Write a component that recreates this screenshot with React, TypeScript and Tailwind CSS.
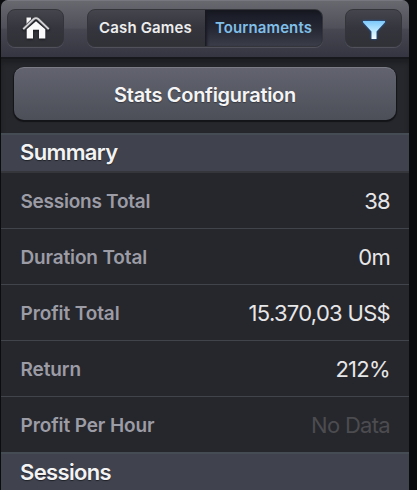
const rows = [
  { label: "Sessions Total", value: "38", tone: "text-[#e6e6e8]", lt: "tracking-[-0.25px]", vt: "tracking-[-0.7px]" },
  { label: "Duration Total", value: "0m", tone: "text-[#e6e6e8]", lt: "tracking-[-0.15px]", vt: "tracking-[-0.7px]" },
  { label: "Profit Total", value: "15.370,03 US$", tone: "text-[#e6e6e8]", lt: "tracking-[-0.1px]", vt: "tracking-[-0.7px]" },
  { label: "Return", value: "212%", tone: "text-[#e6e6e8]", lt: "tracking-[-0.1px]", vt: "tracking-[-0.7px]" },
  { label: "Profit Per Hour", value: "No Data", tone: "text-[#4c4c50]", lt: "tracking-[-0.1px]", vt: "tracking-[-0.7px]" },
];

const recessed =
  "rounded-[8px] border border-[#34353b] bg-linear-to-b from-[#45464d] via-[#35363d] to-[#303137] shadow-[0_1px_0_#50515b]";

function HomeIcon() {
  return (
    <svg width="28" height="24" viewBox="0 0 28 24" className="drop-shadow-[0_1px_1px_#15161b]">
      <path d="M4.5 1.5h4.5v5l-4.5 4z" fill="#f7f7f8" />
      <path d="M14 5.2l9.3 8v9.3h-6.3v-8.7h-6v8.7H4.7v-9.3z" fill="#fafafa" />
      <path d="M1.2 13.2L11.8 3q2.2-1.8 4.4 0l10.6 10.2" fill="none" stroke="#4b4c53" strokeWidth="3.4" strokeLinejoin="round" />
      <path d="M1.2 13.2L11.8 3q2.2-1.8 4.4 0l10.6 10.2" fill="none" stroke="#d3d3d6" strokeWidth="1.8" strokeLinejoin="round" />
    </svg>
  );
}

function FilterIcon() {
  return (
    <svg width="26" height="22" viewBox="0 0 26 22" className="mt-[3px] drop-shadow-[0_0_1px_#1768d2]">
      <defs>
        <linearGradient id="funnel" x1="0" y1="0" x2="0" y2="1">
          <stop offset="0" stopColor="#7cc8fc" />
          <stop offset=".5" stopColor="#b9e7ff" />
          <stop offset="1" stopColor="#f4fcff" />
        </linearGradient>
      </defs>
      <path d="M2 2h22v1.2L15.5 12.6V20h-5v-7.4L2 3.2z" fill="url(#funnel)" />
    </svg>
  );
}

function SectionHeader({ title, last = false }: { title: string; last?: boolean }) {
  return (
    <h2
      className={`flex h-10 shrink-0 items-center border-t-2 border-[#454c54] bg-[#40434e] pl-[19px] text-[22px] leading-none font-semibold tracking-[-0.65px] text-[#f3f3f4] [text-shadow:0_1px_1px_#202127] ${
        last ? "pb-[3px]" : "border-b-2 border-b-[#34363c] pb-[2px]"
      }`}
    >
      {title}
    </h2>
  );
}

export default function App() {
  return (
    <div className="h-[490px] w-[417px] overflow-hidden bg-[#0b0c0e] pl-px font-['Inter',sans-serif]">
      <main className="flex h-full w-[408px] flex-col overflow-hidden rounded-t-[7px] bg-[#26272c]">
        <header className="flex h-[57px] shrink-0 items-start justify-between border-t border-[#77777f] bg-[linear-gradient(to_bottom,#68686f_0%,#4f5059_48%,#464751_51%,#343540_100%)] pt-2 pr-[7px] pl-[6px]">
          <button aria-label="Home" className={`flex h-[38px] w-[57px] items-center justify-center ${recessed}`}>
            <HomeIcon />
          </button>
          <div className={`ml-px flex h-[38px] w-[236px] overflow-hidden text-[15px] font-semibold ${recessed}`}>
            <button className="w-[117px] pt-px pr-[2px] tracking-[0.15px] text-[#ededee]">Cash Games</button>
            <button className="flex-1 bg-linear-to-b from-[#171923] via-[#252733] to-[#3b3d49] pt-px tracking-[0.1px] text-[#80bfe8] shadow-[inset_2px_2px_3px_#171820]">
              Tournaments
            </button>
          </div>
          <button aria-label="Filter" className={`flex h-[38px] w-[57px] items-center justify-center ${recessed}`}>
            <FilterIcon />
          </button>
        </header>
        <div className="flex h-[76px] shrink-0 justify-center border-t-2 border-[#17181b] pt-2 shadow-[inset_0_4px_4px_#1d1e22]">
          <button className="h-[53px] w-[382px] rounded-[10px] border-t border-[#7b7c86] bg-linear-to-b from-[#62636f] to-[#4c4f58] pt-px text-[20px] font-semibold tracking-[-0.3px] text-[#f5f5f6] shadow-[0_1px_1px_1px_#131418] [text-shadow:0_1px_1px_#383941]">
            Stats Configuration
          </button>
        </div>
        <SectionHeader title="Summary" />
        <dl className="shrink-0">
          {rows.map((r, i) => (
            <div
              key={r.label}
              className={`flex items-center justify-between px-[19px] ${
                i === 0 ? "h-[55px]" : "h-[56px] border-t border-[#42444b]"
              }`}
            >
              <dt className={`pt-[3px] pl-[0.5px] text-[19px] font-semibold text-[#9c9ca6] ${r.lt}`}>{r.label}</dt>
              <dd className={`pt-px text-[22px] ${r.tone} ${r.vt}`}>{r.value}</dd>
            </div>
          ))}
        </dl>
        <SectionHeader title="Sessions" last />
      </main>
    </div>
  );
}
